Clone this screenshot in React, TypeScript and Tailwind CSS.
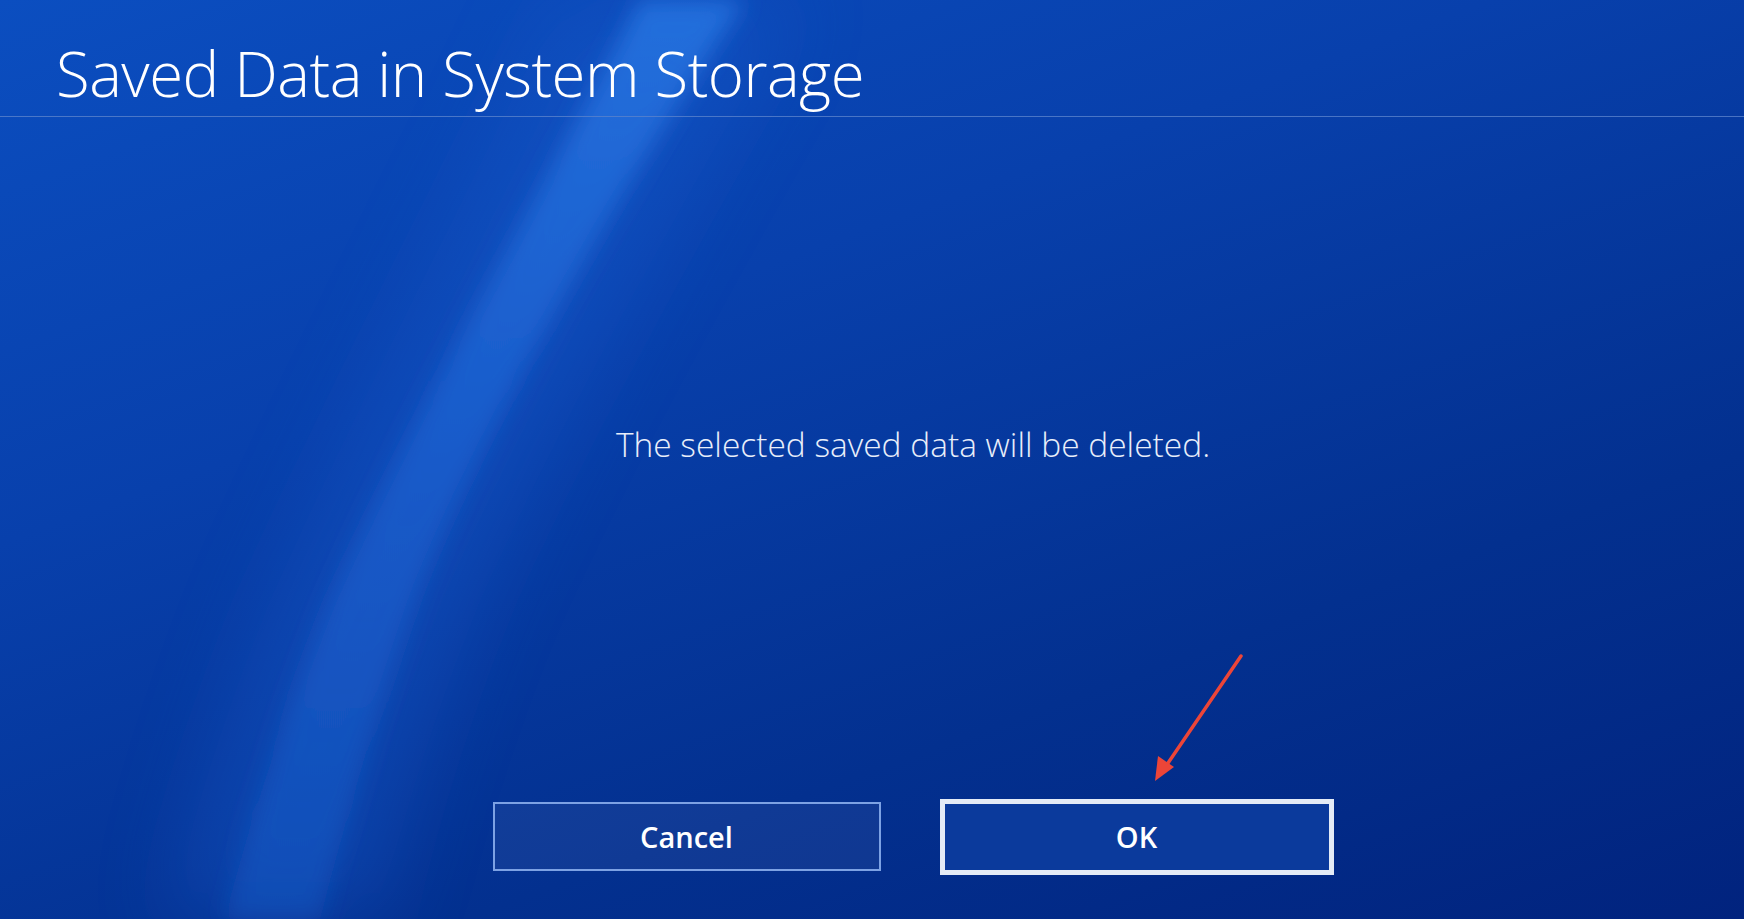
import React from 'react';

function Backdrop() {
  return (
    <svg
      className="pointer-events-none absolute inset-0 h-full w-full"
      viewBox="0 0 1744 919"
      preserveAspectRatio="none"
    >
      <defs>
        <filter id="soft" x="-20%" y="-20%" width="140%" height="140%">
          <feGaussianBlur stdDeviation="11" />
        </filter>
        <filter id="softer" x="-20%" y="-20%" width="140%" height="140%">
          <feGaussianBlur stdDeviation="40" />
        </filter>
        <linearGradient id="bandFade" x1="0" y1="0" x2="0" y2="1">
          <stop offset="0" stopColor="#2a7ae6" stopOpacity="0.75" />
          <stop offset="0.5" stopColor="#1f66d6" stopOpacity="0.6" />
          <stop offset="1" stopColor="#1a5cc8" stopOpacity="0.45" />
        </linearGradient>
      </defs>
      {/* wide glow */}
      <path
        d="M560,0 C480,170 360,400 270,600 C230,700 190,820 170,919 L380,919 C400,820 440,700 480,600 C560,420 700,170 800,0 Z"
        fill="#1a5ed0"
        opacity="0.35"
        filter="url(#softer)"
      />
      {/* main band */}
      <path
        d="M640,0 C565,150 420,400 330,600 C290,700 250,820 225,919 L320,919 C345,820 380,700 415,600 C470,450 630,170 745,0 Z"
        fill="url(#bandFade)"
        filter="url(#soft)"
      />
    </svg>
  );
}

function RedArrow() {
  return (
    <svg
      className="pointer-events-none absolute left-0 top-0"
      width="1744"
      height="919"
      viewBox="0 0 1744 919"
    >
      <line x1="1241" y1="656" x2="1166" y2="766" stroke="#ec4538" strokeWidth="3.5" strokeLinecap="round" />
      <polygon points="1155,781 1158,756 1174,767" fill="#ec4538" />
    </svg>
  );
}

export default function App() {
  return (
    <div
      className="relative h-[919px] w-[1744px] overflow-hidden bg-[linear-gradient(160deg,#0b4ec0_0%,#0840ac_35%,#03308f_70%,#01237e_100%)] text-white"
      style={{ fontFamily: '"Open Sans", "Noto Sans", sans-serif' }}
    >
      <Backdrop />
      <div className="relative flex h-full flex-col">
        <header className="flex h-[117px] items-start border-b-[1.5px] border-[#5a82cc]/80 pl-[56px] pt-[43px]">
          <h1 className="text-[61.7px] font-light leading-none tracking-[-0.5px]">Saved Data in System Storage</h1>
        </header>

        <div className="flex flex-1 flex-col items-center pl-[82px]">
          <p className="mt-[311px] text-[33.5px] font-light leading-none text-[#e8eefa]">
            The selected saved data will be deleted.
          </p>

          <div className="mt-[337px] flex items-center gap-[59px]">
            <button className="flex h-[69px] w-[388px] items-center justify-center border-2 border-[#7da2e4] bg-white/[0.05] text-[29px] font-semibold text-white">
              Cancel
            </button>
            <button className="flex h-[76px] w-[394px] items-center justify-center border-[5px] border-[#e4ebf6] bg-[#0b3a9c] text-[29px] font-semibold text-white">
              OK
            </button>
          </div>
        </div>
      </div>
      <RedArrow />
    </div>
  );
}
